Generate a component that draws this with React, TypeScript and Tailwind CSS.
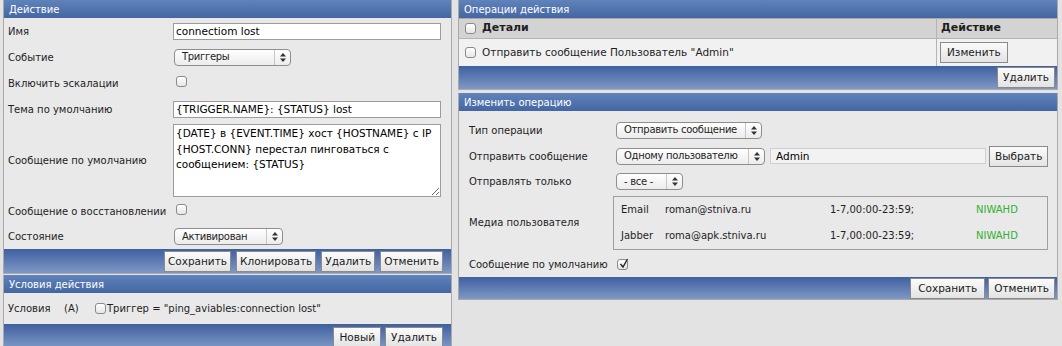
import type { ReactNode } from "react";

// Zabbix-style "action" edit screen: left column holds the action form and its
// conditions, right column holds operations and the operation editor.

function Header({ children }: { children: ReactNode }) {
  return (
    <div className="flex h-[18px] items-center bg-gradient-to-b from-[#6183bb] to-[#4466a2] pl-[5px] text-white">
      {children}
    </div>
  );
}

function Bar({ children, className = "" }: { children: ReactNode; className?: string }) {
  return (
    <div
      className={`flex items-center justify-end bg-gradient-to-b from-[#3f60a0] to-[#7f98c5] ${className}`}
    >
      {children}
    </div>
  );
}

function Btn({ children, className = "px-[3px]" }: { children: ReactNode; className?: string }) {
  return (
    <button
      className={`h-[21px] shrink-0 border border-[#8a8a8a] bg-gradient-to-b from-[#fbfbfb] to-[#e3e3e3] text-[10.5px] leading-none text-[#1a1a1a] ${className}`}
    >
      {children}
    </button>
  );
}

function Arrows() {
  return (
    <svg width="6" height="9" viewBox="0 0 6 9">
      <path d="M3 0 L6 3.5 L0 3.5 Z M0 5.5 L6 5.5 L3 9 Z" fill="#333" />
    </svg>
  );
}

function Select({ label, className = "" }: { label: string; className?: string }) {
  return (
    <div
      className={`flex h-[17px] items-center rounded-[4px] border border-[#8e8e8e] bg-gradient-to-b from-white to-[#ececec] ${className}`}
    >
      <span className="flex-1 truncate pl-[7px] leading-none tracking-[-0.3px]">{label}</span>
      <span className="flex h-full w-[16px] shrink-0 items-center justify-center border-l border-[#c6c6c6]">
        <Arrows />
      </span>
    </div>
  );
}

function Check({ checked = false }: { checked?: boolean }) {
  return (
    <span className="relative inline-block h-[11px] w-[11px] shrink-0 rounded-[3px] border border-[#8a8a8a] bg-gradient-to-b from-white to-[#e6e6e6]">
      {checked && (
        <svg className="absolute left-[1px] top-[-2px]" width="10" height="11" viewBox="0 0 10 11">
          <path d="M1.5 6 L4 9 L8.5 1" fill="none" stroke="#222" strokeWidth="1.4" />
        </svg>
      )}
    </span>
  );
}

function Field({ value, className = "" }: { value: string; className?: string }) {
  return (
    <input
      readOnly
      value={value}
      className={`h-[17px] border border-[#9c9c9c] bg-white px-[2px] text-[10.5px] text-black outline-none ${className}`}
    />
  );
}

function Row({ label, h, children }: { label: string; h: string; children: ReactNode }) {
  return (
    <div className={`grid grid-cols-[165px_1fr] items-center ${h}`}>
      <span>{label}</span>
      <div className="flex items-center">{children}</div>
    </div>
  );
}

function OpRow({ label, h, children }: { label: string; h: string; children: ReactNode }) {
  return (
    <div className={`grid grid-cols-[147px_1fr] items-center ${h}`}>
      <span>{label}</span>
      <div className="flex items-center">{children}</div>
    </div>
  );
}

const MEDIA = [
  { type: "Email", to: "roman@stniva.ru" },
  { type: "Jabber", to: "roma@apk.stniva.ru" },
];

export default function App() {
  return (
    <div className="flex h-[346px] w-[1062px] gap-[6px] overflow-hidden bg-[#e3e3e3] pl-[3px] font-['DejaVu_Sans',Verdana,sans-serif] text-[10px] text-[#1e1e1e]">
      {/* left column */}
      <div className="flex w-[449px] shrink-0 flex-col gap-[1px]">
        <section className="border-x border-b border-[#a9a9a9] bg-[#e9e9e9]">
          <Header>Действие</Header>
          <div className="pl-[4px]">
            <Row label="Имя" h="h-[26px]">
              <Field value="connectiom lost" className="w-[268px]" />
            </Row>
            <Row label="Событие" h="h-[26px]">
              <Select label="Триггеры" className="ml-[1px] w-[117px]" />
            </Row>
            <Row label="Включить эскалации" h="h-[26px]">
              <span className="ml-[3px]">
                <Check />
              </span>
            </Row>
            <Row label="Тема по умолчанию" h="h-[26px]">
              <Field value="{TRIGGER.NAME}: {STATUS} lost" className="w-[268px]" />
            </Row>
            <Row label="Сообщение по умолчанию" h="h-[77px]">
              <textarea
                readOnly
                value={"{DATE} в {EVENT.TIME} хост {HOSTNAME} с IP {HOST.CONN} перестал пинговаться с сообщением: {STATUS}"}
                className="h-[73px] w-[268px] resize border border-[#9c9c9c] bg-white px-[2px] py-[1px] text-[10.5px] leading-[15.5px] text-black outline-none"
              />
            </Row>
            <Row label="Сообщение о восстановлении" h="h-[25px]">
              <span className="ml-[3px]">
                <Check />
              </span>
            </Row>
            <Row label="Состояние" h="h-[25px]">
              <Select label="Активирован" className="ml-[1px] w-[109px]" />
            </Row>
          </div>
          <Bar className="h-[24px] gap-[5px] pr-[8px]">
            <Btn>Сохранить</Btn>
            <Btn>Клонировать</Btn>
            <Btn>Удалить</Btn>
            <Btn>Отменить</Btn>
          </Bar>
        </section>

        <section className="flex-1 border-x border-[#a9a9a9] bg-[#e9e9e9]">
          <Header>Условия действия</Header>
          <div className="flex h-[31px] items-center pl-[4px]">
            <span className="w-[56px]">Условия</span>
            <span className="w-[31px]">(A)</span>
            <Check />
            <span className="ml-[1px]">Триггер = "ping_aviables:connection lost"</span>
          </div>
          <Bar className="h-[24px] items-start gap-[4px] pr-[8px] pt-[3px]">
            <Btn className="px-[5px]">Новый</Btn>
            <Btn className="px-[5px]">Удалить</Btn>
          </Bar>
        </section>
      </div>

      {/* right column */}
      <div className="flex w-[600px] shrink-0 flex-col gap-[2px]">
        <section className="border-x border-b border-[#a9a9a9] bg-[#e9e9e9]">
          <Header>Операции действия</Header>
          <div className="border-t border-[#a9a9a9]">
            <div className="grid h-[20px] grid-cols-[478px_1fr] border-b border-[#b4b4b4] bg-[#d3d3d3] text-[11px] font-bold">
              <div className="flex items-center gap-[6px] border-r border-[#b4b4b4] pl-[6px]">
                <Check />
                <span>Детали</span>
              </div>
              <div className="flex items-center pl-[4px]">Действие</div>
            </div>
            <div className="grid h-[27px] grid-cols-[478px_1fr] bg-[#f1f1f1] text-[10.5px]">
              <div className="flex items-center gap-[6px] border-r border-[#b4b4b4] pl-[6px]">
                <Check />
                <span>Отправить сообщение Пользователь "Admin"</span>
              </div>
              <div className="flex items-center pl-[3px]">
                <Btn className="px-[6px]">Изменить</Btn>
              </div>
            </div>
          </div>
          <Bar className="h-[23px] pr-[2px]">
            <Btn className="px-[5px]">Удалить</Btn>
          </Bar>
        </section>

        <section className="mt-[1px] border-x border-b border-[#a9a9a9] bg-[#e9e9e9]">
          <Header>Изменить операцию</Header>
          <div className="pl-[10px] pr-[6px] pt-[6px]">
            <OpRow label="Тип операции" h="h-[26px]">
              <Select label="Отправить сообщение" className="w-[146px]" />
            </OpRow>
            <OpRow label="Отправить сообщение" h="h-[26px]">
              <Select label="Одному пользователю" className="w-[149px]" />
              <input
                readOnly
                value="Admin"
                className="ml-[5px] h-[16px] w-[216px] border border-[#cfcfcf] bg-[#f2f2f2] px-[5px] text-[10.5px] text-black outline-none"
              />
              <Btn className="ml-[3px] px-[5px]">Выбрать</Btn>
            </OpRow>
            <OpRow label="Отправлять только" h="h-[25px]">
              <Select label="- все -" className="w-[67px]" />
            </OpRow>
            <OpRow label="Медиа пользователя" h="h-[57px]">
              <div className="-ml-[3px] w-full border border-[#9f9f9f]">
                {MEDIA.map((m) => (
                  <div key={m.type} className="grid h-[26px] grid-cols-[44px_165px_146px_1fr] items-center pl-[7px]">
                    <span>{m.type}</span>
                    <span>{m.to}</span>
                    <span>1-7,00:00-23:59;</span>
                    <span className="text-[#2fb12f]">NIWAHD</span>
                  </div>
                ))}
              </div>
            </OpRow>
            <div className="flex h-[26px] items-center">
              <span className="w-[148px]">Сообщение по умолчанию</span>
              <Check checked />
            </div>
          </div>
          <Bar className="h-[22px] gap-[3px] pr-[2px]">
            <Btn className="px-[7px]">Сохранить</Btn>
            <Btn className="px-[5px]">Отменить</Btn>
          </Bar>
        </section>
      </div>
    </div>
  );
}
